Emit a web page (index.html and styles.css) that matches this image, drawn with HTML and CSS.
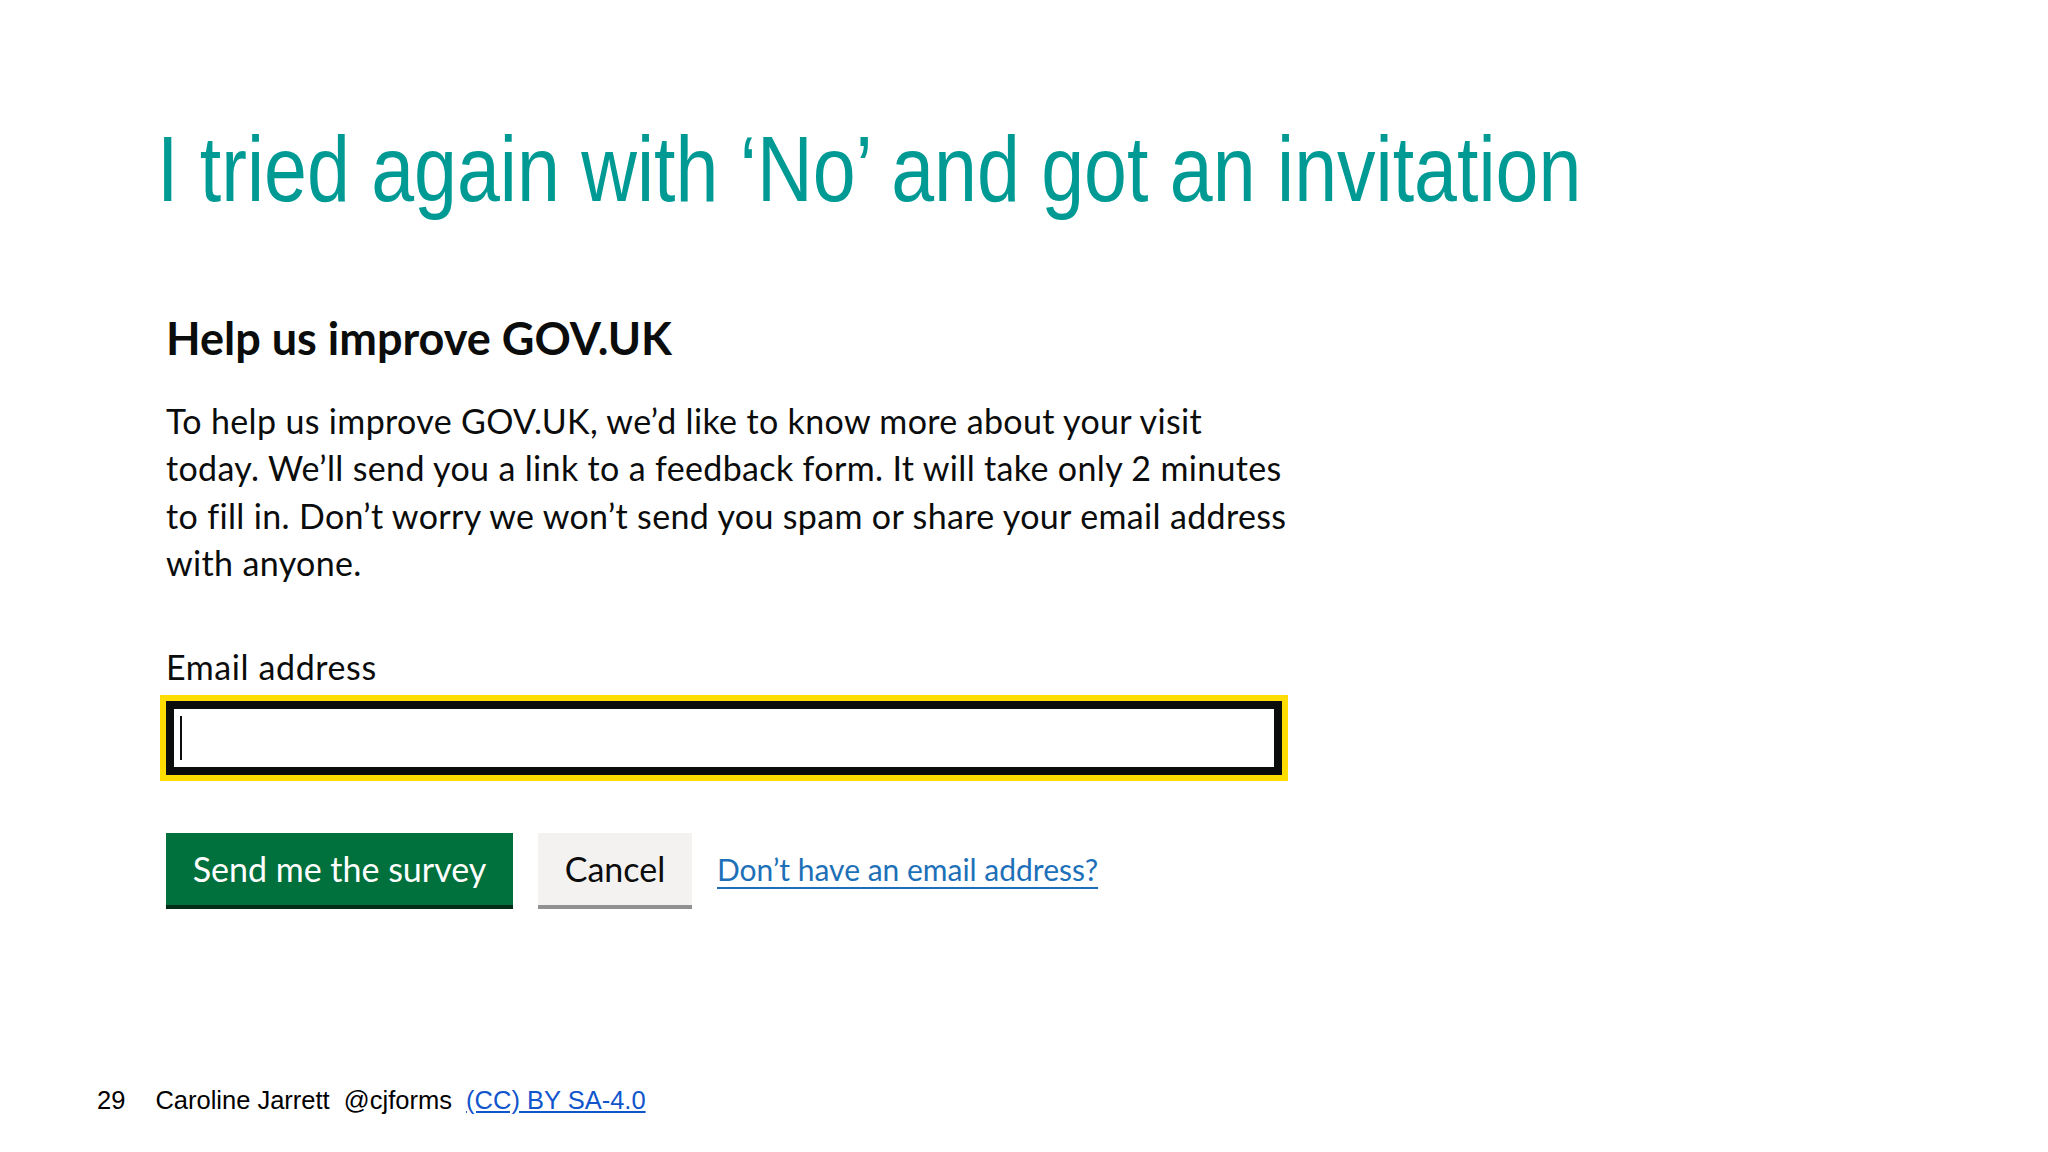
FILE: index.html
```html
<!DOCTYPE html>
<html lang="en">
<head>
  <meta charset="UTF-8" />
  <meta name="viewport" content="width=device-width, initial-scale=1.0" />
  <title>I tried again with ‘No’ and got an invitation</title>
  <link rel="stylesheet" href="styles.css">
</head>
<body>
  <div class="slide">
    <h1 class="slide-title">I tried again with ‘No’ and got an invitation</h1>

    <div class="survey">
      <h2 class="survey-heading">Help us improve GOV.UK</h2>
      <p class="survey-body">To help us improve GOV.UK, we’d like to know more about your visit<br>
        today. We’ll send you a link to a feedback form. It will take only 2 minutes<br>
        to fill in. Don’t worry we won’t send you spam or share your email address<br>
        with anyone.</p>

      <label class="survey-label" for="email">Email address</label>
      <div class="input-wrap">
        <input type="text" id="email" class="survey-input" />
        <span class="caret"></span>
      </div>

      <div class="survey-actions">
        <button class="btn btn-primary">Send me the survey</button>
        <button class="btn btn-secondary">Cancel</button>
        <a href="#" class="survey-link">Don’t have an email address?</a>
      </div>
    </div>

    <div class="slide-footer">
      <span class="page-num">29</span>
      <span>Caroline Jarrett&nbsp; @cjforms&nbsp; <a href="#" class="licence">(CC) BY SA-4.0</a></span>
    </div>
  </div>
</body>
</html>
```

FILE: styles.css
```css
body { margin: 0; background: #fff; }
.slide { width: 2048px; height: 1152px; box-sizing: border-box; padding: 116px 0 0 0; display: flex; flex-direction: column; }

.slide-title { margin: 0 0 0 157px; font-family: "Liberation Sans Narrow", "Liberation Sans", Arial, sans-serif; font-weight: normal; font-size: 93px; line-height: 107px; color: #009a94; white-space: nowrap; transform: scaleX(0.829); transform-origin: left center; }

.survey { margin: 89px 0 0 166px; width: 1122px; font-family: Lato, "Noto Sans", sans-serif; color: #0b0c0c; }
.survey-heading { margin: 0; font-size: 45px; line-height: 52px; font-weight: bold; }
.survey-body { margin: 33px 0 0 0; font-size: 34px; line-height: 47.4px; letter-spacing: 0.35px; white-space: nowrap; }
.survey-label { display: block; margin-top: 56px; font-size: 34px; line-height: 47px; letter-spacing: 0.6px; }

.input-wrap { position: relative; margin: 5px 0 0 -6px; width: 1128px; box-sizing: border-box; border: 6px solid #ffdd00; }
.survey-input { display: block; width: 100%; height: 74px; box-sizing: border-box; border: 8px solid #0b0c0c; background: #fff; outline: none; margin: 0; padding: 0 14px; font-size: 34px; }
.caret { position: absolute; left: 14px; top: 15px; width: 2px; height: 44px; background: #0b0c0c; }

.survey-actions { display: flex; align-items: flex-start; gap: 25px; margin-top: 52px; }
.btn { font-family: Lato, "Noto Sans", sans-serif; font-size: 34px; border: none; border-radius: 0; height: 72px; padding: 0 18px; margin: 0; cursor: pointer; }
.btn-primary { background: #00703c; color: #fff; width: 347px; box-shadow: 0 4px 0 #002d18; }
.btn-secondary { background: #f3f2f1; color: #0b0c0c; width: 154px; box-shadow: 0 4px 0 #929191; }
.survey-link { color: #1d70b8; font-size: 30px; line-height: 72px; text-decoration: underline; text-decoration-thickness: 2px; text-underline-offset: 6px; }

.slide-footer { margin-top: auto; padding: 0 0 37px 97px; display: flex; gap: 30px; font-family: "Liberation Sans", Arial, sans-serif; font-size: 25.5px; line-height: 30px; color: #000; }
.licence { color: #1155cc; text-decoration: underline; }
```
